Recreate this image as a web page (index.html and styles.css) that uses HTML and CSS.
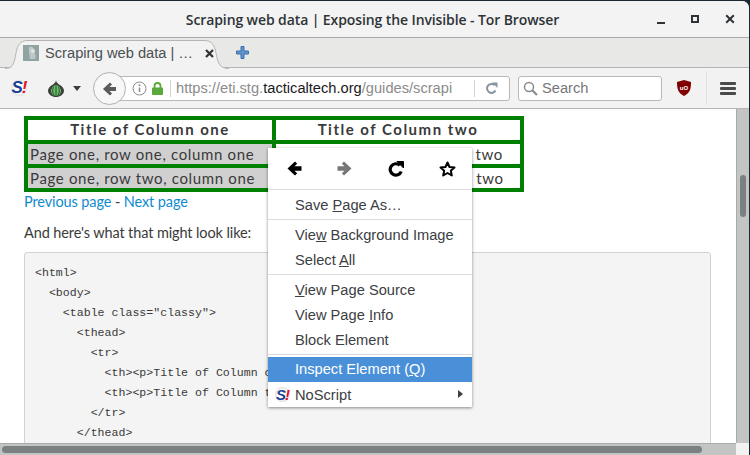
FILE: index.html
```html
<!DOCTYPE html>
<html lang="en">
<head>
<meta charset="utf-8">
<title>Scraping web data | Exposing the Invisible - Tor Browser</title>
<link rel="stylesheet" href="styles.css">
</head>
<body>
<div class="window">
  <header class="titlebar">
    <span class="title">Scraping web data | Exposing the Invisible - Tor Browser</span>
    <div class="winctl">
      <span class="win-min"></span>
      <span class="win-max"></span>
      <svg class="win-close" width="10" height="10" viewBox="0 0 10 10"><path d="M1.2 1.2l7.6 7.6M8.8 1.2L1.2 8.8" stroke="#2e3436" stroke-width="2"/></svg>
    </div>
  </header>

  <div class="tabbar">
    <div class="tab">
      <svg class="tab-shape" width="224" height="31" viewBox="0 0 224 31"><path d="M0 29.5C8 29.5 9 25 11 14 12.500 6 15 1.500 23 1.500H199C207 1.500 209.500 6 211 14 213 25 215 29.500 224 29.500V31H0Z" fill="#f2f2f2"/><path d="M0 29.500C8 29.500 9 25 11 14 12.500 6 15 1.500 23 1.500H199C207 1.500 209.500 6 211 14 213 25 215 29.500 224 29.500" fill="none" stroke="#b4b4b4"/></svg>
      <svg class="favicon" width="16" height="16" viewBox="0 0 16 16"><rect width="16" height="16" fill="#8fa3a3"/><path d="M6 2c4-1 6 2 5 5 2 2 2 5 1 7H7C7 10 5 6 6 2Z" fill="#bfc8c6"/><circle cx="10" cy="6" r="2" fill="#dfe4e2"/></svg>
      <span class="tab-label">Scraping web data | …</span>
      <svg class="tab-close" width="9" height="9" viewBox="0 0 9 9"><path d="M1 1l7 7M8 1L1 8" stroke="#333" stroke-width="2.200"/></svg>
    </div>
    <svg class="newtab" width="13" height="13" viewBox="0 0 13 13"><path d="M5 .5h3V5h4.500v3H8v4.500H5V8H.5V5H5Z" fill="#5e95d2" stroke="#3a6ea8"/></svg>
  </div>

  <div class="toolbar">
    <span class="noscript-logo tb-ns">S<i>!</i></span>
    <svg class="onion" width="16" height="17" viewBox="0 0 16 19" preserveAspectRatio="none"><path d="M8 0c0 2 1 3 3 5 3 2 5 4 5 7 0 4-4 7-8 7s-8-3-8-7c0-3 2-5 5-7 2-2 3-3 3-5Z" fill="#3c3f3c"/><path d="M8 5c3 2 5 4 5 7s-2 6-5 6-5-3-5-6 2-5 5-7Z" fill="#6dbb6a"/><path d="M8 5v13M5.500 8c-1.500 3-1 7 1 10M10.500 8c1.500 3 1 7-1 10" stroke="#1f4e22" fill="none"/></svg>
    <span class="caret"></span>
    <div class="backwrap">
      <div class="urlbar">
        <svg class="info" width="15" height="15" viewBox="0 0 15 15"><circle cx="7.500" cy="7.500" r="6.500" fill="none" stroke="#8c8c8c"/><path d="M7.500 6.500v4.500" stroke="#8c8c8c" stroke-width="1.500"/><circle cx="7.500" cy="4.300" r="1" fill="#8c8c8c"/></svg>
        <svg class="lock" width="11" height="13" viewBox="0 0 11 13"><path d="M2.500 6V4a3 3 0 0 1 6 0v2" fill="none" stroke="#58a83a" stroke-width="1.800"/><rect y="5.500" width="11" height="7.500" rx="1" fill="#58a83a"/></svg>
        <span class="urlsep"></span>
        <span class="url">https://eti.stg.<b>tacticaltech.org</b>/guides/scrapi</span>
        <span class="urlsep end"></span>
        <svg class="reload" width="13" height="13" viewBox="0 0 13 13"><path d="M10.500 8.500A4.500 4.500 0 1 1 9.500 3" fill="none" stroke="#8795a1" stroke-width="2"/><path d="M7 .5h5.500V6Z" fill="#8795a1"/></svg>
      </div>
      <div class="backbtn">
        <svg width="15" height="14" viewBox="0 0 15 15"><path d="M8 .5L.5 7.500 8 14.500l2.200-2.300L7.500 9.700h7V5.300h-7l2.700-2.500Z" fill="#5a5a5a"/></svg>
      </div>
    </div>
    <div class="searchbar">
      <svg width="15" height="15" viewBox="0 0 15 15"><circle cx="6" cy="6" r="4.500" fill="none" stroke="#8a8a8a" stroke-width="1.500"/><path d="M9.500 9.500L14 14" stroke="#8a8a8a" stroke-width="2.200"/></svg>
      <span>Search</span>
    </div>
    <svg class="ublock" width="14" height="16" viewBox="0 0 14 16"><path d="M7 0l7 2c0 7-1 11-7 14C1 13 0 9 0 2Z" fill="#800000"/><text x="7" y="10" text-anchor="middle" class="ublock-text">uO</text></svg>
    <span class="tb-divider"></span>
    <div class="hamburger"><span></span><span></span><span></span></div>
  </div>

  <div class="viewport">
    <div class="hpane">
      <main class="page">
        <table class="classy">
          <thead>
            <tr><th>Title of Column one</th><th>Title of Column two</th></tr>
          </thead>
          <tbody>
            <tr><td>Page one, row one, column one</td><td>Page one, row one, column two</td></tr>
            <tr><td>Page one, row two, column one</td><td>Page one, row two, column two</td></tr>
          </tbody>
        </table>
        <p class="pager"><a href="#">Previous page</a> - <a href="#">Next page</a></p>
        <p class="lead">And here's what that might look like:</p>
<pre class="code">&lt;html&gt;
  &lt;body&gt;
    &lt;table class="classy"&gt;
      &lt;thead&gt;
        &lt;tr&gt;
          &lt;th&gt;&lt;p&gt;Title of Column one&lt;/p&gt;&lt;/th&gt;
          &lt;th&gt;&lt;p&gt;Title of Column two&lt;/p&gt;&lt;/th&gt;
        &lt;/tr&gt;
      &lt;/thead&gt;
      &lt;tbody&gt;</pre>
      </main>
      <div class="hscroll"><span class="hthumb"></span></div>
    </div>
    <div class="vscroll"><span class="vthumb"></span><span class="corner"></span></div>
  </div>

  <nav class="menu">
    <div class="menu-nav">
      <svg width="15" height="15" viewBox="0 0 15 15"><path d="M8 .5L.5 7.500 8 14.500l2.200-2.300L7.500 9.700h7V5.300h-7l2.700-2.500Z" fill="#000"/></svg>
      <svg width="15" height="15" viewBox="0 0 15 15"><path d="M7 .5l7.500 7L7 14.500l-2.200-2.300L7.500 9.700h-7V5.300h7L4.800 2.800Z" fill="#777"/></svg>
      <svg width="16" height="16" viewBox="0 0 16 16"><path d="M13.200 10.500A5.700 5.700 0 1 1 11.800 4.300" fill="none" stroke="#000" stroke-width="3.200"/><path d="M9 .5h6.500V7Z" fill="#000" stroke="#000" stroke-linejoin="round"/></svg>
      <svg width="17" height="16" viewBox="0 0 17 16"><path d="M8.500 1.500l2 4.500 5 .5-3.700 3.300 1 4.700-4.300-2.500-4.300 2.500 1-4.700L1.500 6.500l5-.5Z" fill="none" stroke="#000" stroke-width="2" stroke-linejoin="round"/></svg>
    </div>
    <div class="menu-item sep-before">Save <u>P</u>age As…</div>
    <div class="menu-item sep-before">Vie<u>w</u> Background Image</div>
    <div class="menu-item">Select <u>A</u>ll</div>
    <div class="menu-item sep-before"><u>V</u>iew Page Source</div>
    <div class="menu-item">View Page <u>I</u>nfo</div>
    <div class="menu-item">Block Element</div>
    <div class="menu-item sep-before active">Inspect Element (<u>Q</u>)</div>
    <div class="menu-item sub"><span class="noscript-logo menu-ns">S<i>!</i></span>NoScript<span class="arrow"></span></div>
  </nav>
</div>
</body>
</html>
```
FILE: styles.css
```css
html, body { margin: 0; padding: 0; }
body { width: 750px; height: 455px; overflow: hidden; background: #1b2733; }

.window {
  position: relative;
  width: 749px;
  height: 454px;
  margin-top: 1px;
  border-top-right-radius: 7px;
  background: #f2f2f2;
  display: flex;
  flex-direction: column;
  overflow: hidden;
  font-family: "Liberation Sans", Arial, sans-serif;
}

/* title bar */
.titlebar {
  height: 36px;
  flex: none;
  position: relative;
  display: flex;
  align-items: center;
  justify-content: center;
  background: #f3f3f3;
  box-sizing: border-box;
  padding-right: 4px;
}
.title { font: 600 14px "Open Sans", sans-serif; color: #2e3436; letter-spacing: -.1px; }
.winctl { position: absolute; right: 14px; top: 14px; display: flex; align-items: flex-start; gap: 26px; }
.win-min { width: 8px; height: 2px; margin-top: 7px; background: #2e3436; }
.win-max { width: 4px; height: 4px; border: 2px solid #2e3436; margin-left: 0; }
.win-close { display: block; margin-top: -1px; }

/* tab bar */
.tabbar {
  height: 31px;
  flex: none;
  box-sizing: border-box;
  display: flex;
  align-items: center;
  background: #e8e8e7;
  border-top: 1px solid #a8a8a8;
  border-bottom: 1px solid #b4b4b4;
  padding-left: 5px;
}
.tab {
  position: relative;
  width: 224px;
  height: 29px;
  display: flex;
  align-items: center;
  margin-top: 1px;
}
.tab-shape { position: absolute; left: 0; top: 0; }
.favicon { position: relative; margin-left: 18px; }
.tab-label { position: relative; margin-left: 6px; width: 157px; font-size: 14.67px; color: #4a4f52; white-space: nowrap; }
.tab-close { position: relative; margin-left: 3px; }
.newtab { margin-left: 7px; }

/* toolbar */
.toolbar {
  height: 41px;
  flex: none;
  box-sizing: border-box;
  display: flex;
  align-items: center;
  background: #f2f2f2;
  border-bottom: 1px solid #b5b5b5;
}
.noscript-logo {
  font-family: "Liberation Sans", sans-serif;
  font-weight: 700;
  font-style: italic;
  color: #1b3f94;
  background: radial-gradient(circle, #fff 45%, #b9b9b9 100%);
  border-radius: 50%;
  display: inline-flex;
  align-items: center;
  justify-content: center;
}
.noscript-logo i { color: #e8101c; }
.tb-ns { width: 16px; height: 16px; font-size: 17px; letter-spacing: -1px; margin-left: 11px; }
.onion { margin-left: 21px; }
.caret { width: 0; height: 0; border: 4.500px solid transparent; border-top: 5px solid #3d3d3d; border-bottom: 0; margin-left: 9px; }
.backwrap { position: relative; width: 417px; height: 34px; margin-left: 12px; display: flex; align-items: center; }
.backbtn {
  position: absolute;
  left: 0;
  top: 1px;
  width: 31px;
  height: 31px;
  border: 1px solid #b0b0b0;
  border-radius: 50%;
  background: #f7f7f7;
  display: flex;
  align-items: center;
  justify-content: center;
}
.urlbar {
  flex: 1;
  height: 23px;
  margin-left: 22px;
  border: 1px solid #b9b9b9;
  border-radius: 3px;
  background: #fff;
  display: flex;
  align-items: center;
  font-size: 14.67px;
  color: #8b8b8b;
  white-space: nowrap;
}
.info { margin-left: 16px; flex: none; }
.lock { margin-left: 5px; flex: none; }
.urlsep { width: 1px; height: 17px; background: #d4d4d4; margin: 0 5px 0 7px; flex: none; }
.urlsep.end { margin: 0 0 0 auto; }
.url b { font-weight: 400; color: #1a1a1a; }
.url { width: 280px; overflow: hidden; }
.reload { margin: 0 11px 0 10px; flex: none; }
.searchbar {
  width: 138px;
  height: 23px;
  margin-left: 8px;
  border: 1px solid #b9b9b9;
  border-radius: 3px;
  background: #fff;
  display: flex;
  align-items: center;
  gap: 4px;
  padding-left: 4px;
  flex: none;
  font-size: 14.67px;
  color: #777;
  box-sizing: content-box;
}
.ublock { margin-left: 15px; flex: none; }
.ublock-text { font: 700 6px "Liberation Sans", sans-serif; fill: #fff; }
.tb-divider { width: 1px; height: 34px; background: #e0e0e0; margin-left: 15px; }
.hamburger { margin-left: 13px; width: 16px; display: flex; flex-direction: column; gap: 2px; }
.hamburger span { height: 3px; background: #4a4a4a; border-radius: 1px; }

/* viewport */
.viewport { flex: 1; min-height: 0; display: flex; background: #fff; }
.hpane { flex: 1; min-width: 0; display: flex; flex-direction: column; }
.page {
  flex: 1;
  min-height: 0;
  overflow: hidden;
  padding: 7px 25px 0 24px;
  font-family: "Lato", sans-serif;
  font-size: 14.5px;
  color: #3a3a3a;
  letter-spacing: -.11px;
}
.classy { border-collapse: collapse; width: 500px; table-layout: fixed; margin: 0; font-size: 15px; letter-spacing: .65px; }
.classy th, .classy td { border: 4px solid #008000; height: 20px; padding: 0 2px; line-height: 20px; white-space: nowrap; box-sizing: content-box; }
.classy th { height: 18px; padding-bottom: 2px; line-height: 18px; text-align: center; font-weight: 700; letter-spacing: 1.5px; }
.classy td:first-child { background: #d0d0d0; }
.pager { margin: 0; height: 20px; line-height: 20px; }
.pager a { color: #0f8bd0; text-decoration: none; }
.lead { margin: 10px 0 0; line-height: 22px; height: 22px; }
.code {
  margin: 8px 0 0;
  height: 240px;
  box-sizing: border-box;
  overflow: hidden;
  padding: 10px 10px;
  border: 1px solid #d2d2d2;
  border-radius: 3px;
  background: #f4f4f4;
  font: 11.600px/20px "Liberation Mono", monospace;
  letter-spacing: 0;
  color: #3a3a3a;
}
.hscroll { height: 12px; flex: none; box-sizing: border-box; background: #c3c5c5; border-top: 1px solid #a9abab; padding: 2px 0 0 2px; }
.hthumb { display: block; width: 700px; height: 7px; border-radius: 4px; background: #7b8080; }
.vscroll { width: 13px; flex: none; background: #c3c5c5; border-left: 1px solid #a9abab; box-sizing: border-box; display: flex; flex-direction: column; }
.vthumb { display: block; width: 6px; height: 42px; margin: 66px 0 0 3px; border-radius: 3px; background: #7b8080; }
.corner { display: block; margin: auto 0 0 -1px; width: 14px; height: 12px; background: #f2f2f2; }

/* context menu */
.menu {
  position: absolute;
  left: 268px;
  top: 147px;
  width: 204px;
  background: #fff;
  box-shadow: 0 1px 3px rgba(0, 0, 0, .45);
  font-size: 14.67px;
  color: #3c4043;
}
.menu-nav { height: 41px; display: flex; align-items: center; justify-content: space-between; padding: 0 16px 0 19px; box-sizing: border-box; }
.menu-item { position: relative; height: 25px; line-height: 25px; padding-left: 27px; }
.sep-before { margin-top: 5px; }
.sep-before::before { content: ""; position: absolute; left: 0; right: 0; top: -4px; height: 1px; background: #dcdcdc; }
.menu-nav + .sep-before { margin-top: 4px; }
.menu-item.active { background: #4a90d9; color: #fff; margin-top: 4px; }
.menu-item.active::before { top: -3px; }
.sub { display: flex; align-items: center; padding-top: 1px; box-sizing: border-box; }
.menu-ns { position: absolute; left: 7px; top: 5px; width: 15px; height: 15px; font-size: 15px; letter-spacing: -1px; }
.arrow { position: absolute; right: 9px; top: 8px; width: 0; height: 0; border: 4px solid transparent; border-left: 5px solid #3c4043; border-right: 0; }
```
